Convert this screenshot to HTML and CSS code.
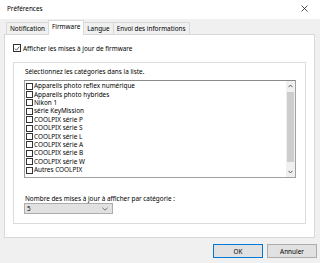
FILE: index.html
```html
<!DOCTYPE html>
<html lang="fr">
<head>
    <meta charset="UTF-8">
    <title>Préférences</title>
    <link rel="stylesheet" href="styles.css">
</head>
<body>
<div class="titlebar">
    <span>Préférences</span>
    <svg class="close" width="7" height="7" viewBox="0 0 7 7"><path d="M0.5 0.5L6.5 6.5M6.5 0.5L0.5 6.5" stroke="#222" stroke-width="0.8" fill="none"/></svg>
</div>
<div class="tabs">
    <div class="tab">Notification</div>
    <div class="tab active">Firmware</div>
    <div class="tab">Langue</div>
    <div class="tab">Envoi des informations</div>
</div>
<div class="panel">
    <label class="check-row">
        <span class="box">
            <svg width="7" height="7" viewBox="0 0 7 7"><path d="M1 3.6L2.8 5.4L6.2 1.4" stroke="#222" stroke-width="0.9" fill="none"/></svg>
        </span>
        Afficher les mises à jour de firmware
    </label>
    <div class="group">
        <div class="group-label">Sélectionnez les catégories dans la liste.</div>
        <div class="list">
            <div class="list-items">
                <div class="item"><span class="box"></span>Appareils photo reflex numérique</div>
                <div class="item"><span class="box"></span>Appareils photo hybrides</div>
                <div class="item"><span class="box"></span>Nikon 1</div>
                <div class="item"><span class="box"></span>série KeyMission</div>
                <div class="item"><span class="box"></span>COOLPIX série P</div>
                <div class="item"><span class="box"></span>COOLPIX série S</div>
                <div class="item"><span class="box"></span>COOLPIX série L</div>
                <div class="item"><span class="box"></span>COOLPIX série A</div>
                <div class="item"><span class="box"></span>COOLPIX série B</div>
                <div class="item"><span class="box"></span>COOLPIX série W</div>
                <div class="item"><span class="box"></span>Autres COOLPIX</div>
            </div>
            <div class="scrollbar">
                <div class="arrow">
                    <svg width="5" height="4" viewBox="0 0 5 4"><path d="M0.5 3.2L2.5 1L4.5 3.2" stroke="#606060" stroke-width="1" fill="none"/></svg>
                </div>
                <div class="track"><div class="thumb"></div></div>
                <div class="arrow">
                    <svg width="5" height="4" viewBox="0 0 5 4"><path d="M0.5 0.8L2.5 3L4.5 0.8" stroke="#606060" stroke-width="1" fill="none"/></svg>
                </div>
            </div>
        </div>
        <div class="count-label">Nombre des mises à jour à afficher par catégorie :</div>
        <div class="select">
            <span>5</span>
            <svg width="6" height="4" viewBox="0 0 6 4"><path d="M0.5 0.8L3 3.2L5.5 0.8" stroke="#555" stroke-width="0.8" fill="none"/></svg>
        </div>
    </div>
</div>
<div class="buttons">
    <button class="btn default">OK</button>
    <button class="btn">Annuler</button>
</div>
</body>
</html>
```

FILE: styles.css
```css
* {
    box-sizing: border-box;
}
body {
    margin: 0;
    width: 320px;
    height: 263px;
    background-color: #f0f0f0;
    font-family: 'Noto Sans', 'Open Sans', sans-serif;
    font-size: 6.4px;
    color: #000000;
    overflow: hidden;
}
.titlebar {
    height: 19px;
    background: #ffffff;
    display: flex;
    align-items: center;
    justify-content: space-between;
    padding: 0 12px 2px 7px;
}
.tabs {
    display: flex;
    align-items: flex-end;
    height: 15px;
    padding-left: 6px;
}
.tab {
    height: 12px;
    line-height: 11px;
    padding: 0 3px;
    border: 1px solid #d9d9d9;
    border-bottom: none;
    margin-right: -1px;
    background: #f0f0f0;
}
.tab.active {
    height: 15px;
    line-height: 12px;
    background: #ffffff;
    position: relative;
    z-index: 1;
    margin-bottom: -1px;
}
.panel {
    height: 204px;
    margin: 0 5px 0 4px;
    background: #ffffff;
    border: 1px solid #d9d9d9;
    padding-top: 9px;
}
.check-row {
    display: flex;
    align-items: center;
    height: 8px;
    padding-left: 8px;
    gap: 2px;
}
.box {
    display: inline-flex;
    align-items: center;
    justify-content: center;
    width: 8px;
    height: 8px;
    border: 1px solid #333333;
    background: #ffffff;
    flex-shrink: 0;
}
.item .box {
    width: 7px;
    height: 7px;
}
.group {
    height: 162px;
    margin: 10px 8px 0 8px;
    border: 1px solid #dcdcdc;
    padding: 0 9px 0 10px;
}
.group-label {
    height: 17px;
    line-height: 17px;
    padding-left: 1px;
}
.list {
    display: flex;
    height: 98px;
    border: 1px solid #a0a0a0;
    border-top-color: #8a8a8a;
    background: #ffffff;
}
.list-items {
    flex: 1;
    padding: 1px 0 0 1px;
}
.item {
    display: flex;
    align-items: center;
    gap: 1px;
    height: 8.4px;
    line-height: 8px;
    white-space: nowrap;
}
.scrollbar {
    width: 9px;
    display: flex;
    flex-direction: column;
    background: #f0f0f0;
}
.arrow {
    height: 10px;
    display: flex;
    align-items: center;
    justify-content: center;
}
.track {
    flex: 1;
    padding: 0 1px;
}
.thumb {
    height: 70px;
    margin-top: 1px;
    background: #cdcdcd;
}
.count-label {
    height: 8px;
    line-height: 8px;
    margin-top: 17px;
    padding-left: 1px;
}
.select {
    display: flex;
    align-items: center;
    justify-content: space-between;
    width: 89px;
    height: 11px;
    padding: 0 4px 0 2px;
    background: #e1e1e1;
    border: 1px solid #adadad;
}
.buttons {
    display: flex;
    justify-content: flex-end;
    gap: 4px;
    padding: 6px 3px 0 0;
}
.btn {
    width: 50px;
    height: 14px;
    padding: 0;
    font-family: 'Noto Sans', 'Open Sans', sans-serif;
    font-size: 6.4px;
    color: #000000;
    background: #e1e1e1;
    border: 1px solid #adadad;
}
.btn.default {
    border-color: #0078d7;
}
```
